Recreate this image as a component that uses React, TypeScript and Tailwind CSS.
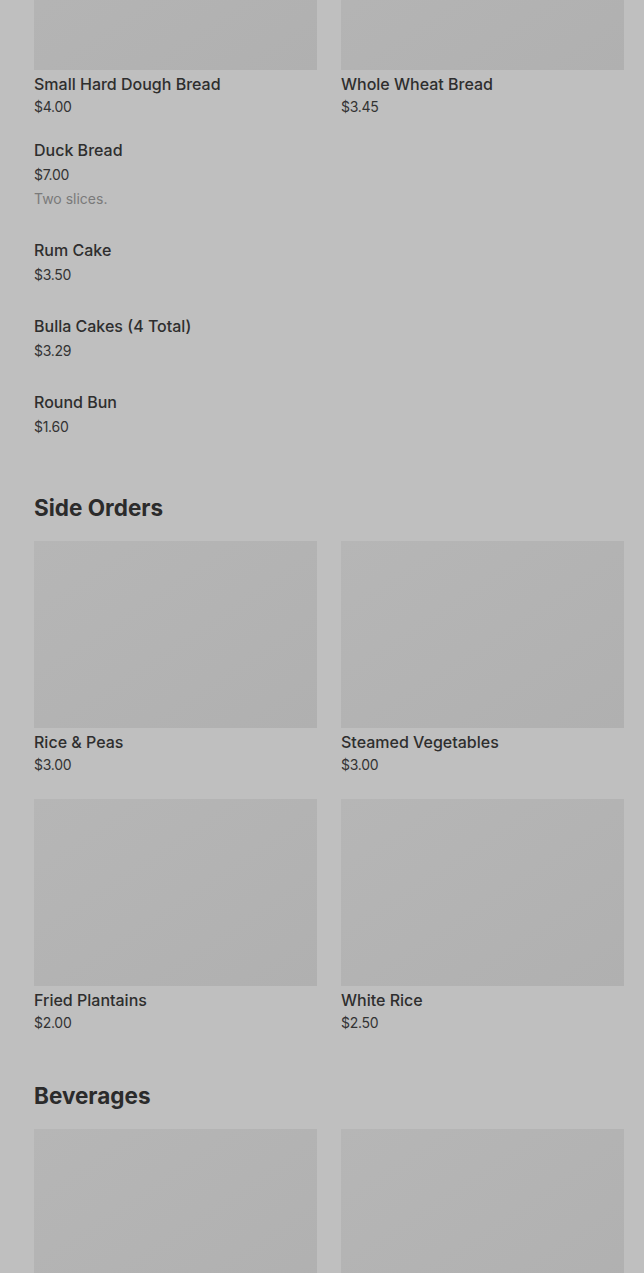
import React from 'react'

type Item = { name: string; price: string; desc?: string }

const topGrid: Item[] = [
  { name: 'Small Hard Dough Bread', price: '$4.00' },
  { name: 'Whole Wheat Bread', price: '$3.45' },
]

const breadList: Item[] = [
  { name: 'Duck Bread', price: '$7.00', desc: 'Two slices.' },
  { name: 'Rum Cake', price: '$3.50' },
  { name: 'Bulla Cakes (4 Total)', price: '$3.29' },
  { name: 'Round Bun', price: '$1.60' },
]

const sides: Item[] = [
  { name: 'Rice & Peas', price: '$3.00' },
  { name: 'Steamed Vegetables', price: '$3.00' },
  { name: 'Fried Plantains', price: '$2.00' },
  { name: 'White Rice', price: '$2.50' },
]

function Photo() {
  return <div className="h-[187px] w-full bg-gradient-to-br from-[#b6b6b6] to-[#b0b0b0]" />
}

function Card({ item }: { item: Item }) {
  return (
    <div className="flex flex-col">
      <Photo />
      <div className="mt-1 text-[16px] font-medium leading-5 text-[#2e2e2e]">{item.name}</div>
      <div className="mt-1 text-[14px] leading-[18px] tracking-[-0.02em] text-[#333333]">{item.price}</div>
    </div>
  )
}

function ListItem({ item }: { item: Item }) {
  return (
    <div className="flex flex-col">
      <div className="text-[16px] font-medium leading-5 text-[#2e2e2e]">{item.name}</div>
      <div className="mt-1.5 text-[14px] leading-[18px] tracking-[-0.02em] text-[#333333]">{item.price}</div>
      {item.desc && (
        <div className="mt-1.5 text-[14px] leading-[18px] text-[#7a7a7a]">{item.desc}</div>
      )}
    </div>
  )
}

function Heading({ children }: { children: React.ReactNode }) {
  return <h2 className="text-[22.5px] font-bold leading-7 text-[#2b2b2b]">{children}</h2>
}

export default function App() {
  return (
    <div className="flex min-h-screen flex-col overflow-hidden bg-[#bfbfbf] pl-[34px] pr-[20px] pb-10 font-['Inter',sans-serif]">
      <div className="-mt-[117px] grid grid-cols-2 gap-x-6 gap-y-[25px]">
        {topGrid.map((it) => (
          <Card key={it.name} item={it} />
        ))}
      </div>

      <div className="mt-6 flex flex-col gap-8">
        {breadList.map((it) => (
          <ListItem key={it.name} item={it} />
        ))}
      </div>

      <div className="mt-[58px]">
        <Heading>Side Orders</Heading>
      </div>
      <div className="mt-[19px] grid grid-cols-2 gap-x-6 gap-y-[25px]">
        {sides.map((it) => (
          <Card key={it.name} item={it} />
        ))}
      </div>

      <div className="mt-[50px]">
        <Heading>Beverages</Heading>
      </div>
      <div className="mt-[19px] grid grid-cols-2 gap-x-6">
        <Photo />
        <Photo />
      </div>
    </div>
  )
}
